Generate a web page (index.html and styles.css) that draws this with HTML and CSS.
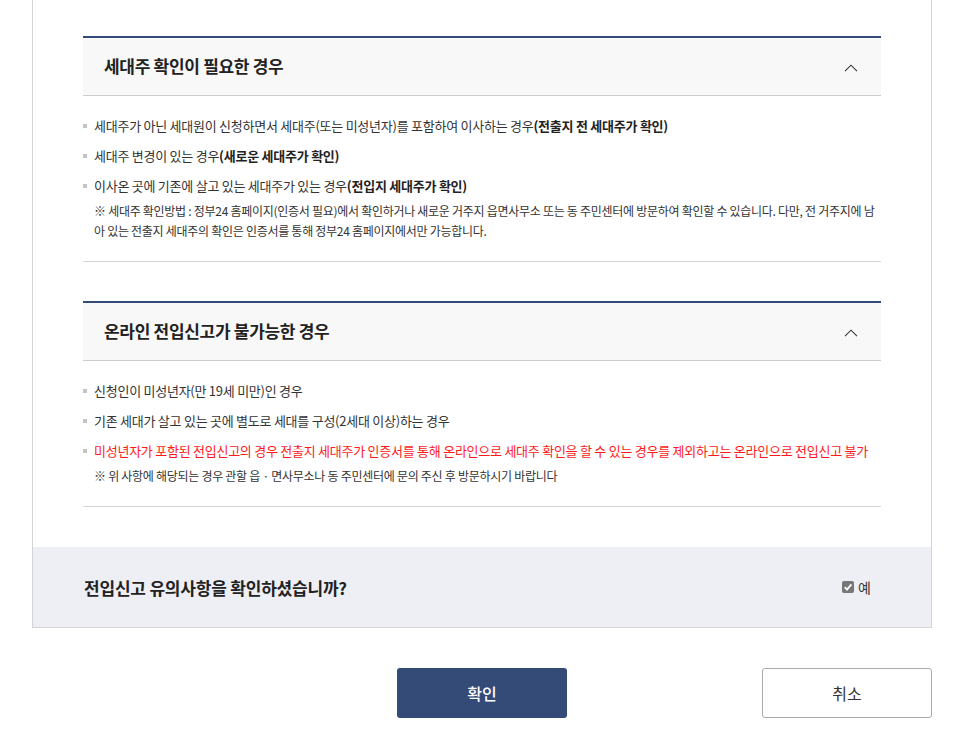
FILE: index.html
```html
<!DOCTYPE html>
<html>
<head lang="ko">
    <meta charset="UTF-8">
    <title>전입신고 유의사항</title>
    <link rel="stylesheet" href="styles.css">
</head>
<body>
<div class="panel">
    <div class="inner">
        <div class="sect">
            <div class="sect-head">
                <h3>세대주 확인이 필요한 경우</h3>
                <svg class="arrow" width="14" height="8" viewBox="0 0 14 8"><path d="M1 7.2 L7 1.2 L13 7.2" fill="none" stroke="#333" stroke-width="1.1"/></svg>
            </div>
            <div class="sect-body">
                <ul class="list">
                    <li>세대주가 아닌 세대원이 신청하면서 세대주(또는 미성년자)를 포함하여 이사하는 경우<b>(전출지 전 세대주가 확인)</b></li>
                    <li>세대주 변경이 있는 경우<b>(새로운 세대주가 확인)</b></li>
                    <li>이사온 곳에 기존에 살고 있는 세대주가 있는 경우<b>(전입지 세대주가 확인)</b></li>
                </ul>
                <p class="note">※ 세대주 확인방법 : 정부24 홈페이지(인증서 필요)에서 확인하거나 새로운 거주지 읍면사무소 또는 동 주민센터에 방문하여 확인할 수 있습니다. 다만, 전 거주지에 남아 있는 전출지 세대주의 확인은 인증서를 통해 정부24 홈페이지에서만 가능합니다.</p>
            </div>
        </div>
        <div class="sect">
            <div class="sect-head">
                <h3>온라인 전입신고가 불가능한 경우</h3>
                <svg class="arrow" width="14" height="8" viewBox="0 0 14 8"><path d="M1 7.2 L7 1.2 L13 7.2" fill="none" stroke="#333" stroke-width="1.1"/></svg>
            </div>
            <div class="sect-body">
                <ul class="list">
                    <li>신청인이 미성년자(만 19세 미만)인 경우</li>
                    <li>기존 세대가 살고 있는 곳에 별도로 세대를 구성(2세대 이상)하는 경우</li>
                    <li class="red">미성년자가 포함된 전입신고의 경우 전출지 세대주가 인증서를 통해 온라인으로 세대주 확인을 할 수 있는 경우를 제외하고는 온라인으로 전입신고 불가</li>
                </ul>
                <p class="note">※ 위 사항에 해당되는 경우 관할 읍 · 면사무소나 동 주민센터에 문의 주신 후 방문하시기 바랍니다</p>
            </div>
        </div>
    </div>
    <div class="agree">
        <strong>전입신고 유의사항을 확인하셨습니까?</strong>
        <label class="chk">
            <span class="box"><svg width="12" height="12" viewBox="0 0 12 12"><path d="M2.8 6.2 L5 8.6 L9.4 3.4" fill="none" stroke="#fff" stroke-width="1.8"/></svg></span>
            예
        </label>
    </div>
</div>
<div class="btns">
    <button class="btn ok">확인</button>
    <button class="btn cancel">취소</button>
</div>
</body>
</html>
```

FILE: styles.css
```css
*{margin:0;padding:0;box-sizing:border-box;}
body{font-family:"Noto Sans CJK KR","Noto Sans",sans-serif;color:#333;background:#fff;}
ul{list-style:none;}
.panel{margin-left:32px;width:900px;border:1px solid #d4d4d4;border-top:0;background:#fff;}
.inner{padding:36px 50px 40px 50px;}
.sect{border-top:2px solid #334a78;border-bottom:1px solid #d4d4d4;}
.sect + .sect{margin-top:39px;}
.sect-head{height:58px;background:#f8f8f8;border-bottom:1px solid #ccc;display:flex;align-items:center;justify-content:space-between;padding:0 23px 0 21px;}
.sect-head h3{font-size:17px;font-weight:bold;color:#222;letter-spacing:-0.3px;margin-top:-2px;}
.arrow{display:block;margin-top:2px;}
.sect-body{padding:15px 0 20px 0;}
.list li{position:relative;padding-left:11px;font-size:13px;line-height:30px;letter-spacing:-0.25px;color:#333;}
.list li:before{content:"";position:absolute;left:0;top:13px;width:4px;height:4px;background:#c4c4c4;}
.list li b{font-weight:bold;color:#222;}
.list li.red{color:#ff1a1a;}
.note{padding-left:11px;font-size:12px;line-height:20px;letter-spacing:-0.28px;color:#333;}
.agree{height:80px;background:#eeeff4;display:flex;align-items:center;justify-content:space-between;padding:0 60px 0 51px;}
.agree strong{font-size:17px;color:#222;letter-spacing:-0.2px;}
.chk{display:flex;align-items:center;gap:4px;font-size:14px;color:#333;}
.box{width:12px;height:12px;border-radius:2px;background:#777;display:block;}
.box svg{display:block;}
.btns{width:900px;margin:40px 0 0 32px;display:grid;grid-template-columns:1fr 170px 1fr;}
.btn{height:50px;width:170px;border-radius:3px;font-family:inherit;font-size:16px;cursor:pointer;}
.ok{grid-column:2;background:#344b78;color:#fff;border:0;font-weight:500;}
.cancel{grid-column:3;justify-self:end;background:#fff;color:#333;border:1px solid #aaa;}
```
